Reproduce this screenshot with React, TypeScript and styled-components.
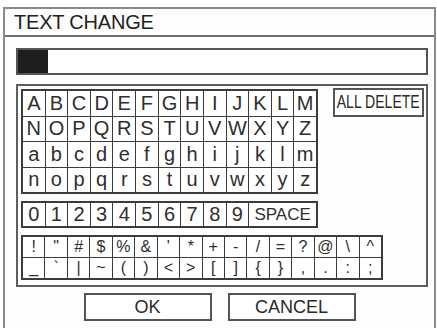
import * as React from "react";
import styled, { createGlobalStyle } from "styled-components";

const GlobalStyle = createGlobalStyle`
  html, body {
    margin: 0;
    padding: 0;
    background: #ffffff;
  }
  body {
    font-family: "Liberation Sans", Arial, sans-serif;
    color: #2a2a2a;
  }
`;

const Window = styled.div`
  box-sizing: border-box;
  margin: 7px 0 0 3px;
  width: 433px;
  height: 321px;
  border: 2px solid #8a8a8a;
  border-bottom: none;
  background: #fdfdfd;
  overflow: hidden;
`;

const TitleBar = styled.div`
  height: 26px;
  line-height: 26px;
  padding-left: 9px;
  font-size: 20px;
  letter-spacing: -0.2px;
  border-bottom: 2px solid #6e6e6e;
  color: #222;
`;

const Body = styled.div`
  display: flex;
  flex-direction: column;
  padding: 11px 0 0 11px;
`;

const InputBox = styled.div`
  box-sizing: border-box;
  width: 412px;
  height: 27px;
  border: 2px solid #555;
  background: #fff;
  display: flex;
  align-items: stretch;
`;

const Cursor = styled.div`
  width: 30px;
  background: #1e1e1e;
`;

const Panel = styled.div`
  box-sizing: border-box;
  margin-top: 9px;
  width: 412px;
  height: 203px;
  border: 2px solid #5e5e5e;
  padding: 3px 0 0 3px;
  display: flex;
  flex-direction: column;
  gap: 7px;
`;

const TopRow = styled.div`
  display: flex;
  align-items: flex-start;
  gap: 15px;
`;

const KeyGrid = styled.div<{ $cols: number; $rows: number; $w: number; $h: number }>`
  box-sizing: border-box;
  display: grid;
  grid-template-columns: repeat(${(p) => p.$cols}, 1fr);
  grid-template-rows: repeat(${(p) => p.$rows}, 1fr);
  gap: 1px;
  width: ${(p) => p.$w}px;
  height: ${(p) => p.$h}px;
  background: #3c3c3c;
  border: 2px solid #3c3c3c;
`;

const Key = styled.div<{ $size?: number; $span?: number }>`
  display: flex;
  align-items: center;
  justify-content: center;
  background: #fff;
  font-size: ${(p) => p.$size ?? 20}px;
  color: #2e2e2e;
  grid-column: span ${(p) => p.$span ?? 1};
  overflow: hidden;
`;

const SideButton = styled.div`
  box-sizing: border-box;
  width: 91px;
  height: 29px;
  margin-top: -1px;
  border: 2px solid #555;
  display: flex;
  align-items: center;
  justify-content: center;
  background: #fff;
  font-size: 18px;
  color: #2a2a2a;
`;

const Narrow = styled.span`
  display: inline-block;
  transform: scaleX(0.78);
  white-space: nowrap;
`;

const Footer = styled.div`
  display: flex;
  justify-content: center;
  gap: 16px;
  padding: 6px 11px 0 0;
`;

const DialogButton = styled.div`
  box-sizing: border-box;
  width: 128px;
  height: 28px;
  border: 2px solid #555;
  background: #fff;
  display: flex;
  align-items: center;
  justify-content: center;
  font-size: 18px;
  color: #2a2a2a;
`;

const upper = "ABCDEFGHIJKLMNOPQRSTUVWXYZ".split("");
const lower = "abcdefghijklmnopqrstuvwxyz".split("");
const digits = "0123456789".split("");
const symbols = [
  "!", "\"", "#", "$", "%", "&", "'", "*", "+", "-", "/", "=", "?", "@", "\\", "^",
  "_", "`", "|", "~", "(", ")", "<", ">", "[", "]", "{", "}", ",", ".", ":", ";",
];

export default function App() {
  return (
    <>
      <GlobalStyle />
      <Window>
        <TitleBar>TEXT CHANGE</TitleBar>
        <Body>
          <InputBox>
            <Cursor />
          </InputBox>
          <Panel>
            <TopRow>
              <KeyGrid $cols={13} $rows={4} $w={297} $h={105}>
                {[...upper, ...lower].map((c) => (
                  <Key key={c}>{c}</Key>
                ))}
              </KeyGrid>
              <SideButton>
                <Narrow>ALL DELETE</Narrow>
              </SideButton>
            </TopRow>
            <KeyGrid $cols={13} $rows={1} $w={297} $h={27}>
              {digits.map((c) => (
                <Key key={c}>{c}</Key>
              ))}
              <Key $span={3} $size={17}>
                SPACE
              </Key>
            </KeyGrid>
            <KeyGrid $cols={16} $rows={2} $w={362} $h={45}>
              {symbols.map((c, i) => (
                <Key key={i} $size={16}>
                  {c}
                </Key>
              ))}
            </KeyGrid>
          </Panel>
          <Footer>
            <DialogButton>OK</DialogButton>
            <DialogButton>CANCEL</DialogButton>
          </Footer>
        </Body>
      </Window>
    </>
  );
}
